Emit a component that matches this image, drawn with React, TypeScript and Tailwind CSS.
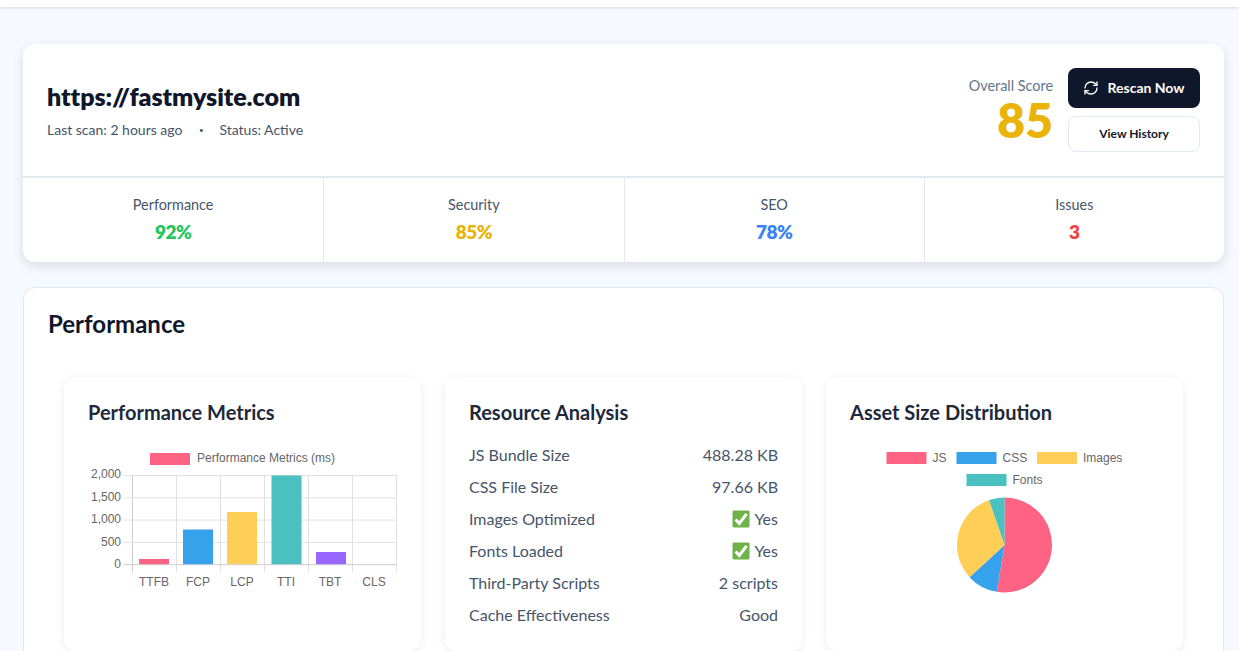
import { RefreshCw } from "lucide-react";

const stats = [
  { label: "Performance", value: "92%", color: "text-[#22c55e]" },
  { label: "Security", value: "85%", color: "text-[#eab308]" },
  { label: "SEO", value: "78%", color: "text-[#3b82f6]" },
  { label: "Issues", value: "3", color: "text-[#ef4444]" },
];

const resources = [
  { label: "JS Bundle Size", value: "488.28 KB" },
  { label: "CSS File Size", value: "97.66 KB" },
  { label: "Images Optimized", value: "Yes", check: true },
  { label: "Fonts Loaded", value: "Yes", check: true },
  { label: "Third-Party Scripts", value: "2 scripts" },
  { label: "Cache Effectiveness", value: "Good" },
];

const bars = [
  { name: "TTFB", x: 7, top: 84, color: "#ff6384" },
  { name: "FCP", x: 51, top: 54.5, color: "#36a2eb" },
  { name: "LCP", x: 95, top: 37, color: "#ffce56" },
  { name: "TTI", x: 139.5, top: 0.5, color: "#4bc0c0" },
  { name: "TBT", x: 184, top: 77, color: "#9966ff" },
];

const labels = ["TTFB", "FCP", "LCP", "TTI", "TBT", "CLS"];
const yTicks = ["2,000", "1,500", "1,000", "500", "0"];

const slices = [
  { value: 500, color: "#ff6384" },
  { value: 100, color: "#36a2eb" },
  { value: 300, color: "#ffce56" },
  { value: 50, color: "#4bc0c0" },
];

function CheckBox() {
  return (
    <svg width="18" height="18" viewBox="0 0 18 18" className="mr-[4px] inline-block align-[-3px]">
      <rect x="0.5" y="0.5" width="17" height="17" rx="1.5" fill="#6fb24a" />
      <path d="M3.6 9.4 7.3 13.4 14.6 3.8" fill="none" stroke="#fff" strokeWidth="3" />
    </svg>
  );
}

function BarChart() {
  return (
    <svg width="320" height="146" viewBox="-44 -28 320 146" className="mt-[21px] block font-['Liberation_Sans',sans-serif]">
      <rect x="18" y="-22" width="40" height="12" fill="#ff6384" />
      <text x="65" y="-13" fontSize="12" fill="#666">Performance Metrics (ms)</text>
      {[0, 1, 2, 3, 4, 5, 6].map((i) => (
        <line key={i} x1={0.5 + i * 44} x2={0.5 + i * 44} y1="0" y2="97" stroke={i === 0 ? "#ccc" : "#e1e1e1"} />
      ))}
      {yTicks.map((t, i) => (
        <g key={t}>
          <line x1="-8" x2="265" y1={0.5 + i * 22.3} y2={0.5 + i * 22.3} stroke={i === 4 ? "#ccc" : "#e1e1e1"} />
          <text x="-11" y={3 + i * 22.5} fontSize="12" fill="#666" textAnchor="end">{t}</text>
        </g>
      ))}
      {bars.map((b) => (
        <rect key={b.name} x={b.x} y={b.top} width="30" height={89.2 - b.top} fill={b.color} />
      ))}
      {labels.map((l, i) => (
        <text key={l} x={22 + i * 44} y="110.5" fontSize="12" fill="#666" textAnchor="middle">{l}</text>
      ))}
    </svg>
  );
}

function PieChart() {
  const total = slices.reduce((s, x) => s + x.value, 0);
  let angle = -Math.PI / 2;
  const cx = 154.5;
  const cy = 93;
  const r = 47.5;
  return (
    <svg width="309" height="150" viewBox="0 -3 309 150" className="mt-[23px] block font-['Liberation_Sans',sans-serif]">
      <rect x="36.5" y="0" width="40" height="12" fill="#ff6384" />
      <text x="82.5" y="10" fontSize="12" fill="#666">JS</text>
      <rect x="106.5" y="0" width="40" height="12" fill="#36a2eb" />
      <text x="152.5" y="10" fontSize="12" fill="#666">CSS</text>
      <rect x="187" y="0" width="40" height="12" fill="#ffce56" />
      <text x="233" y="10" fontSize="12" fill="#666">Images</text>
      <rect x="116.5" y="22" width="40" height="12" fill="#4bc0c0" />
      <text x="162.5" y="32" fontSize="12" fill="#666">Fonts</text>
      {slices.map((s) => {
        const next = angle + (s.value / total) * Math.PI * 2;
        const x1 = cx + r * Math.cos(angle);
        const y1 = cy + r * Math.sin(angle);
        const x2 = cx + r * Math.cos(next);
        const y2 = cy + r * Math.sin(next);
        const large = next - angle > Math.PI ? 1 : 0;
        angle = next;
        return <path key={s.color} d={`M${cx} ${cy}L${x1} ${y1}A${r} ${r} 0 ${large} 1 ${x2} ${y2}Z`} fill={s.color} />;
      })}
    </svg>
  );
}

export default function App() {
  return (
    <div className="h-[651px] overflow-hidden bg-[#f6f9fe] font-['Lato','Noto_Sans',sans-serif]">
      <div className="h-[7px] bg-white shadow-[0_1px_3px_rgba(0,0,0,0.12)]" />

      <div className="pl-[23px] pr-[15px] pt-[37px]">
        <div className="rounded-xl bg-white shadow-[0_4px_12px_rgba(15,23,42,0.12)]">
          <div className="flex h-[134px] items-center justify-between border-b-2 border-[#e2e8f0] px-6">
            <div>
              <h1 className="mt-[-1px] text-[25px] leading-[32px] font-extrabold tracking-[-0.05px] text-[#0f172a]">https://fastmysite.com</h1>
              <div className="mt-[8px] flex items-center text-[14px] leading-5 text-[#475569]">
                <span>Last scan: 2 hours ago</span>
                <span className="ml-[1px] w-[36px] text-center text-[8px]">•</span>
                <span>Status: Active</span>
              </div>
            </div>
            <div className="flex items-center gap-[15px]">
              <div className="text-right">
                <div className="text-[14.4px] leading-5 text-[#64748b]">Overall Score</div>
                <div className="text-[48px] leading-[48px] font-extrabold text-[#eab308]">85</div>
              </div>
              <div className="flex w-[132px] flex-col gap-[8px]">
                <button className="flex h-[40px] items-center justify-center gap-2 rounded-lg bg-[#0f172a] pb-[1px] text-[14px] font-bold text-white">
                  <RefreshCw size={16} />
                  Rescan Now
                </button>
                <button className="h-[36px] rounded-lg border border-[#e2e8f0] bg-white text-[12px] font-bold text-[#0f172a]">
                  View History
                </button>
              </div>
            </div>
          </div>
          <div className="grid h-[84px] grid-cols-4">
            {stats.map((s, i) => (
              <div key={s.label} className={`flex flex-col items-center pt-[17px] ${i > 0 ? "border-l border-[#e2e8f0]" : ""}`}>
                <div className="text-[14.4px] leading-5 text-[#475569]">{s.label}</div>
                <div className={`mt-[3px] text-[19px] leading-7 font-extrabold tracking-[-0.5px] ${s.color}`}>{s.value}</div>
              </div>
            ))}
          </div>
        </div>

        <div className="mt-[25px] rounded-xl border border-[#e2e8f0] bg-white px-6 pt-[20px] pb-6">
          <h2 className="text-[24px] leading-8 font-bold text-[#0f172a]">Performance</h2>
          <div className="mt-[37px] grid grid-cols-3 gap-6 px-4">
            <div className="h-[274px] rounded-xl bg-white px-6 pt-[21px] shadow-[0_2px_10px_rgba(15,23,42,0.08)]">
              <h3 className="text-[20px] leading-7 font-bold text-[#1e293b]">Performance Metrics</h3>
              <BarChart />
            </div>
            <div className="h-[274px] rounded-xl bg-white px-6 pt-[21px] shadow-[0_2px_10px_rgba(15,23,42,0.08)]">
              <h3 className="text-[20px] leading-7 font-bold text-[#1e293b]">Resource Analysis</h3>
              <div className="mt-[13px]">
                {resources.map((r) => (
                  <div key={r.label} className="flex h-[32px] items-center justify-between text-[16px] text-[#475569]">
                    <span>{r.label}</span>
                    <span className="flex items-center">
                      {r.check && <CheckBox />}
                      {r.value}
                    </span>
                  </div>
                ))}
              </div>
            </div>
            <div className="h-[274px] rounded-xl bg-white px-6 pt-[21px] shadow-[0_2px_10px_rgba(15,23,42,0.08)]">
              <h3 className="text-[20px] leading-7 font-bold text-[#1e293b]">Asset Size Distribution</h3>
              <PieChart />
            </div>
          </div>
        </div>
      </div>
    </div>
  );
}
